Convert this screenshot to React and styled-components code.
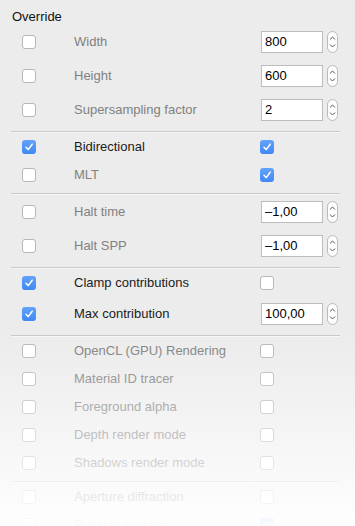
import React from "react";
import styled, { createGlobalStyle } from "styled-components";

const GlobalStyle = createGlobalStyle`
  html, body { margin: 0; padding: 0; background: #ececec; }
  body { font-family: "Liberation Sans", Arial, sans-serif; font-size: 13px; color: #1a1a1a; }
`;

const Panel = styled.div`
  position: relative;
  width: 355px;
  height: 526px;
  overflow: hidden;
  background: #ececec;
`;

const Title = styled.div`
  height: 25px;
  box-sizing: border-box;
  padding: 9px 0 0 12px;
  line-height: 16px;
  color: #111;
`;

const Section = styled.div`
  padding-bottom: 4px;
`;

const Separator = styled.div`
  height: 1px;
  margin: 0 15px 0 11px;
  background: #c9c9c9;
  border-bottom: 1px solid #f6f6f6;
`;

const Row = styled.div`
  display: grid;
  grid-template-columns: 14px 224px auto;
  align-items: center;
  height: ${(p) => (p.$tall ? 34 : 28)}px;
  padding-left: 22px;
`;

const Label = styled.span`
  padding-left: 38px;
  line-height: 16px;
  color: ${(p) => (p.$active ? "#1b1b1b" : "#818181")};
  white-space: nowrap;
`;

const Box = styled.span`
  display: inline-flex;
  align-items: center;
  justify-content: center;
  width: 14px;
  height: 14px;
  box-sizing: border-box;
  border-radius: 3px;
  background: ${(p) => (p.$checked ? "linear-gradient(#64a3fa, #3f88f6)" : "#fff")};
  border: ${(p) => (p.$checked ? "none" : "1px solid #b7b7b7")};
`;

const Field = styled.div`
  display: flex;
  align-items: center;
  gap: 4px;
  margin-left: 1px;
`;

const Input = styled.div`
  width: 62px;
  height: 22px;
  box-sizing: border-box;
  border: 1px solid #bdbdbd;
  background: #fff;
  padding-left: 3px;
  line-height: 20px;
  color: #000;
`;

const Overlay = styled.div`
  position: absolute;
  left: 0;
  right: 0;
  top: 338px;
  bottom: 0;
  pointer-events: none;
  background: linear-gradient(rgba(255, 255, 255, 0), rgba(255, 255, 255, 0.96));
`;

function Check({ checked }) {
  return (
    <Box $checked={checked}>
      {checked && (
        <svg width="10" height="10" viewBox="0 0 10 10">
          <path d="M2 5.3 L4.2 7.6 L8.2 2.2" fill="none" stroke="#fff" strokeWidth="1.5" strokeLinecap="round" strokeLinejoin="round" />
        </svg>
      )}
    </Box>
  );
}

function Stepper() {
  return (
    <svg width="11" height="22" viewBox="0 0 11 22">
      <rect x="0.5" y="0.5" width="10" height="21" rx="5" fill="#fdfdfd" stroke="#b9b9b9" />
      <path d="M3.3 8.2 L5.5 6 L7.7 8.2" fill="none" stroke="#555" strokeWidth="1" strokeLinecap="round" strokeLinejoin="round" />
      <path d="M3.3 13.8 L5.5 16 L7.7 13.8" fill="none" stroke="#555" strokeWidth="1" strokeLinecap="round" strokeLinejoin="round" />
    </svg>
  );
}

function Setting({ label, override, value }) {
  const tall = typeof value === "string";
  return (
    <Row $tall={tall}>
      <Check checked={override} />
      <Label $active={override}>{label}</Label>
      {tall ? (
        <Field>
          <Input>{value}</Input>
          <Stepper />
        </Field>
      ) : (
        <Check checked={value} />
      )}
    </Row>
  );
}

const sections = [
  [
    { label: "Width", override: false, value: "800" },
    { label: "Height", override: false, value: "600" },
    { label: "Supersampling factor", override: false, value: "2" },
  ],
  [
    { label: "Bidirectional", override: true, value: true },
    { label: "MLT", override: false, value: true },
  ],
  [
    { label: "Halt time", override: false, value: "\u20131,00" },
    { label: "Halt SPP", override: false, value: "\u20131,00" },
  ],
  [
    { label: "Clamp contributions", override: true, value: false },
    { label: "Max contribution", override: true, value: "100,00" },
  ],
  [
    { label: "OpenCL (GPU) Rendering", override: false, value: false },
    { label: "Material ID tracer", override: false, value: false },
    { label: "Foreground alpha", override: false, value: false },
    { label: "Depth render mode", override: false, value: false },
    { label: "Shadows render mode", override: false, value: false },
  ],
  [
    { label: "Aperture diffraction", override: false, value: false },
    { label: "Russian roulette", override: false, value: true },
  ],
];

export default function App() {
  return (
    <Panel>
      <GlobalStyle />
      <Title>Override</Title>
      {sections.map((rows, i) => (
        <React.Fragment key={i}>
          {i > 0 && <Separator />}
          <Section>
            {rows.map((r) => (
              <Setting key={r.label} {...r} />
            ))}
          </Section>
        </React.Fragment>
      ))}
      <Overlay />
    </Panel>
  );
}
